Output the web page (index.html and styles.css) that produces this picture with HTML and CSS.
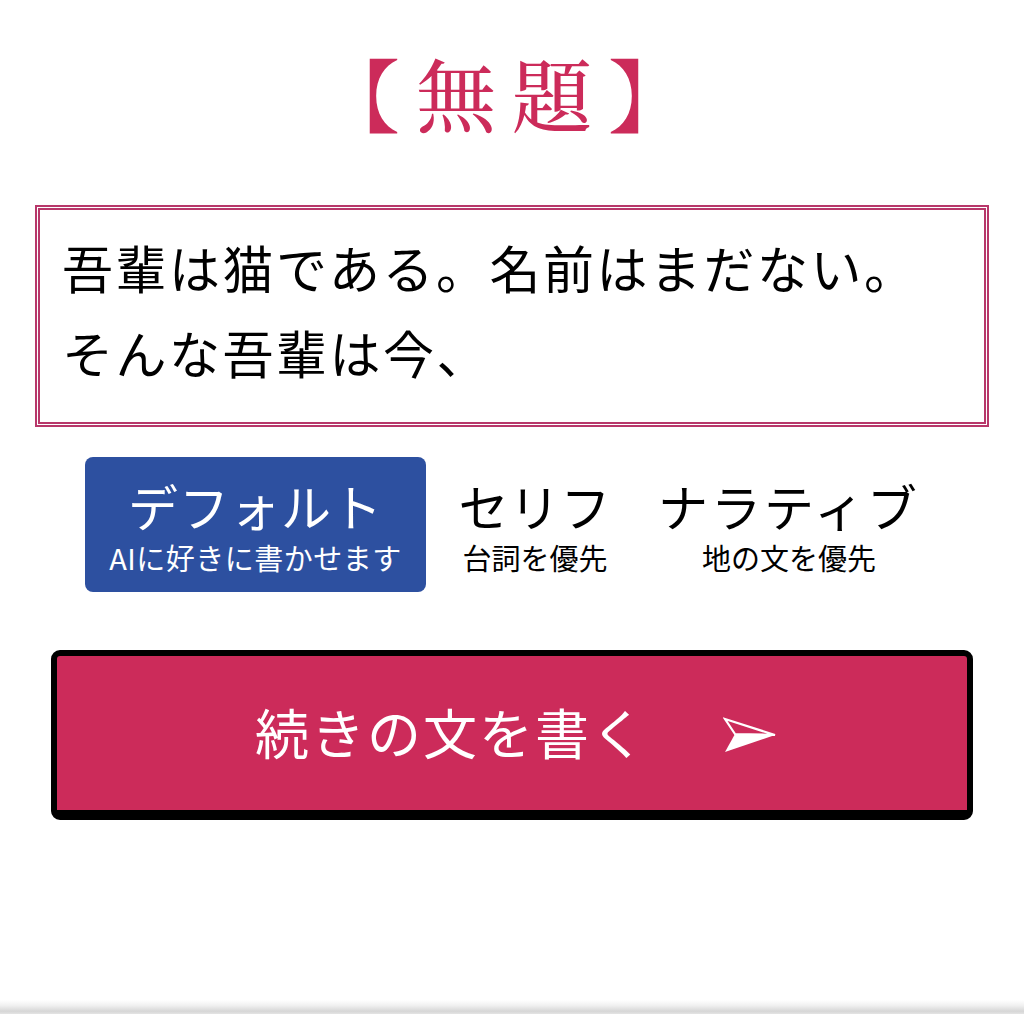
FILE: index.html
```html
<!DOCTYPE html>
<html lang="ja">
<head>
<meta charset="utf-8">
<link rel="stylesheet" href="styles.css">
</head>
<body>
<div class="page">
  <h1 class="title">【無題】</h1>
  <div class="story">
    <p>吾輩は猫である。名前はまだない。<br>そんな吾輩は今、</p>
  </div>
  <div class="modes">
    <div class="mode active">
      <div class="mode-name">デフォルト</div>
      <div class="mode-desc">AIに好きに書かせます</div>
    </div>
    <div class="mode">
      <div class="mode-name">セリフ</div>
      <div class="mode-desc">台詞を優先</div>
    </div>
    <div class="mode">
      <div class="mode-name">ナラティブ</div>
      <div class="mode-desc">地の文を優先</div>
    </div>
  </div>
  <div class="write">
    <span class="write-label">続きの文を書く</span>
    <svg class="arrow" width="54" height="38" viewBox="0 0 54 38">
      <polygon points="2,35 52,18 12,17" fill="#fff"/>
      <polygon points="2,2 52,18 12,17" fill="none" stroke="#fff" stroke-width="2.2" stroke-linejoin="miter"/>
    </svg>
  </div>
</div>
<div class="bottom-edge"></div>
</body>
</html>
```
FILE: styles.css
```css
html, body {
  margin: 0;
  padding: 0;
  background: #fff;
}
body {
  font-family: "Noto Sans CJK JP", "Noto Sans", sans-serif;
  width: 1024px;
  height: 1024px;
  overflow: hidden;
  position: relative;
}
.page {
  display: flex;
  flex-direction: column;
  align-items: center;
}
.title {
  margin: 36px 0 0 0;
  font-family: "Noto Serif CJK JP", "Noto Serif CJK SC", "IPAMincho", serif;
  font-weight: 500;
  font-size: 80px;
  line-height: 112px;
  letter-spacing: 16px;
  color: #cc2b5a;
  padding-left: 0;
}
.story {
  margin-top: 57px;
  width: 944px;
  height: 212px;
  border: 5px double #b8376a;
  box-sizing: content-box;
}
.story p {
  margin: 0;
  padding: 15px 0 0 22px;
  font-size: 51px;
  line-height: 85px;
  letter-spacing: 2.5px;
  color: #000;
}
.modes {
  margin-top: 30px;
  display: flex;
  align-self: flex-start;
  margin-left: 85px;
}
.mode {
  display: flex;
  flex-direction: column;
  align-items: center;
  justify-content: center;
  height: 135px;
  box-sizing: border-box;
  padding-top: 4px;
  color: #000;
}
.mode.active {
  width: 341px;
  background: #2d50a0;
  border-radius: 8px;
  color: #fff;
}
.mode:nth-child(2) { width: 218px; }
.mode:nth-child(3) { width: 290px; }
.mode-name {
  font-size: 50px;
  line-height: 60px;
  letter-spacing: 1px;
}
.mode:nth-child(3) .mode-name {
  letter-spacing: 3px;
}
.mode-desc {
  font-size: 29px;
  line-height: 44px;
}
.mode.active .mode-desc {
  letter-spacing: 0.5px;
}
.write {
  margin-top: 58px;
  width: 910px;
  height: 154px;
  background: #cc2b5a;
  border: 6px solid #000;
  border-bottom-width: 10px;
  border-radius: 9px;
  display: flex;
  align-items: center;
  justify-content: center;
  gap: 76px;
  color: #fff;
}
.write-label {
  font-size: 54px;
  line-height: 70px;
  letter-spacing: 2px;
  margin-left: 8px;
  margin-top: -2px;
}
.arrow {
  display: block;
  margin-top: 6px;
}
.bottom-edge {
  position: absolute;
  left: 0;
  right: 0;
  top: 1000px;
  height: 14px;
  background: linear-gradient(to bottom, #fff 0%, #f0f0f0 40%, #d6d6d6 80%, #e4e4e4 100%);
}
```
